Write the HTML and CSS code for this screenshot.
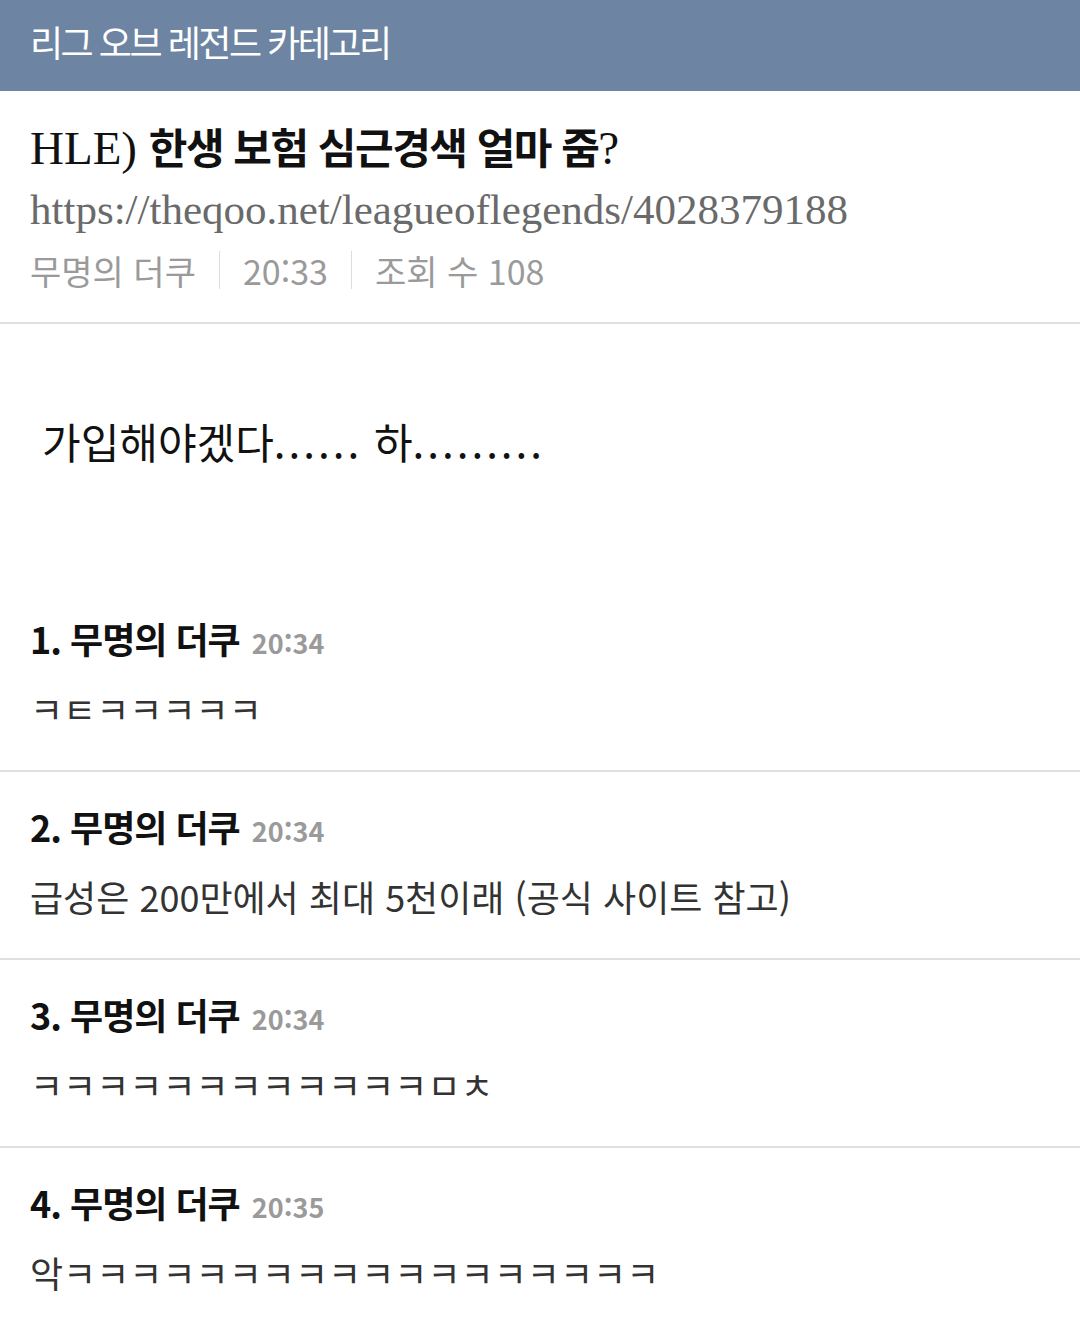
FILE: index.html
```html
<!DOCTYPE html>
<html lang="ko">
<head>
  <meta charset="UTF-8">
  <meta name="viewport" content="width=device-width, initial-scale=1.0">
  <title>리그 오브 레전드 카테고리</title>
  <link rel="stylesheet" href="styles.css">
</head>
<body>
  <div class="category-bar">리그 오브 레전드 카테고리</div>

  <div class="post-head">
    <h1 class="post-title">HLE) <b>한생 보험 심근경색 얼마 줌</b>?</h1>
    <div class="post-url">https://theqoo.net/leagueoflegends/4028379188</div>
    <div class="post-meta">
      <span>무명의 더쿠</span>
      <span class="sep"></span>
      <span>20:33</span>
      <span class="sep"></span>
      <span>조회 수 108</span>
    </div>
  </div>

  <div class="post-body">가입해야겠다<span class="dots">......</span> 하<span class="dots">.........</span></div>

  <ul class="comments">
    <li class="comment">
      <div class="comment-head">1. 무명의 더쿠 <span class="time">20:34</span></div>
      <p class="comment-text">ㅋㅌㅋㅋㅋㅋㅋ</p>
    </li>
    <li class="comment">
      <div class="comment-head">2. 무명의 더쿠 <span class="time">20:34</span></div>
      <p class="comment-text">급성은 200만에서 최대 5천이래 (공식 사이트 참고)</p>
    </li>
    <li class="comment">
      <div class="comment-head">3. 무명의 더쿠 <span class="time">20:34</span></div>
      <p class="comment-text">ㅋㅋㅋㅋㅋㅋㅋㅋㅋㅋㅋㅋㅁㅊ</p>
    </li>
    <li class="comment">
      <div class="comment-head">4. 무명의 더쿠 <span class="time">20:35</span></div>
      <p class="comment-text">악ㅋㅋㅋㅋㅋㅋㅋㅋㅋㅋㅋㅋㅋㅋㅋㅋㅋㅋ</p>
    </li>
  </ul>
</body>
</html>
```

FILE: styles.css
```css
body {
    margin: 0;
    padding: 0;
    font-family: "Noto Sans CJK KR", sans-serif;
    background-color: #ffffff;
    color: #111111;
}

/* Category bar */
.category-bar {
    height: 91px;
    line-height: 82px;
    padding-left: 30px;
    background-color: #6d85a2;
    color: #ffffff;
    font-size: 36px;
    letter-spacing: -2.5px;
}

/* Post header */
.post-head {
    padding: 24px 30px 23px;
    border-bottom: 2px solid #e0e0e0;
}

.post-title {
    margin: 0;
    font-family: "Liberation Serif", "Noto Sans CJK KR", serif;
    font-size: 47px;
    font-weight: normal;
    line-height: 62px;
    color: #111111;
}

.post-title b {
    font-family: "Noto Sans CJK KR", sans-serif;
    font-size: 42px;
    font-weight: bold;
    letter-spacing: -1.5px;
}

.post-url {
    font-family: "Liberation Serif", serif;
    font-size: 43px;
    line-height: 62px;
    color: #6a6a6a;
}

.post-meta {
    display: flex;
    align-items: center;
    gap: 23px;
    height: 58px;
    font-size: 34px;
    color: #9a9a9a;
}

.post-meta .sep {
    width: 1px;
    height: 38px;
    background-color: #dddddd;
}

/* Post body */
.post-body {
    padding: 87px 30px 113px 42px;
    font-size: 42px;
    line-height: 60px;
    color: #111111;
}

.post-body .dots {
    letter-spacing: 3px;
}

/* Comments */
.comments {
    margin: 0;
    padding: 0;
    list-style: none;
}

.comment {
    padding: 29px 30px 37px;
    border-bottom: 2px solid #e0e0e0;
}

.comment:last-child {
    border-bottom: none;
}

.comment-head {
    font-size: 36px;
    font-weight: bold;
    line-height: 50px;
    letter-spacing: -1px;
    color: #111111;
}

.comment-head .time {
    margin-left: 3px;
    font-size: 27px;
    letter-spacing: 0;
    color: #9a9a9a;
}

.comment-text {
    margin: 15px 0 0;
    font-size: 36px;
    line-height: 50px;
    color: #333333;
}
```
